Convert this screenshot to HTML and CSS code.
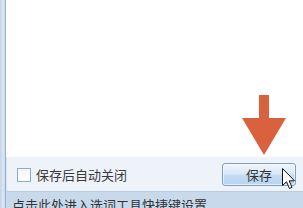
FILE: index.html
```html
<!DOCTYPE html>
<html>
<head>
<meta charset="utf-8">
<link rel="stylesheet" href="styles.css">
</head>
<body>
<div class="frame">
  <div class="side"></div>
  <div class="main">
    <div class="content"></div>
    <div class="panel">
      <label class="check"><span class="box"></span><span class="label">保存后自动关闭</span></label>
      <div class="btn">保存</div>
    </div>
    <div class="status">点击此处进入选词工具快捷键设置</div>
  </div>
</div>
<svg class="arrow" width="46" height="62" viewBox="0 0 46 62">
  <polygon points="17,0 27,0 27,23 44,23 22,60 0,23 17,23" fill="#d9613e"/>
</svg>
<svg class="cursor" width="16" height="24" viewBox="0 0 16 24">
  <path d="M1.5 1.5 L1.5 18.5 L5.5 14.8 L8.5 21.5 L11 20.4 L8.2 13.8 L13.5 13.8 Z" fill="#fff" stroke="#111" stroke-width="1" stroke-linejoin="miter"/>
</svg>
</body>
</html>
```
FILE: styles.css
```css
html, body {
  margin: 0;
  padding: 0;
}
body {
  width: 303px;
  height: 208px;
  overflow: hidden;
  position: relative;
  background: #c9d9ec;
  font-family: "Noto Sans CJK SC", "Noto Sans", sans-serif;
}
.frame {
  display: flex;
  height: 208px;
}
.side {
  width: 5px;
  flex: none;
  background: linear-gradient(to right, #c4d3e5, #dde6f1 60%, #d0dcea);
  border-right: 1px solid #8fb2dc;
}
.main {
  flex: 1;
  display: flex;
  flex-direction: column;
  min-width: 0;
}
.content {
  height: 157px;
  background: #fff;
  flex: none;
}
.panel {
  height: 35px;
  flex: none;
  box-sizing: border-box;
  background: #eef2f9;
  border-left: 1px solid #dbe4ef;
  border-bottom: 1px solid #b9cbe1;
  border-bottom-left-radius: 3px;
  display: flex;
  align-items: center;
  justify-content: space-between;
  padding: 0 7px 0 10px;
}
.check {
  display: flex;
  align-items: center;
  gap: 5px;
  margin-top: 1px;
}
.box {
  width: 12px;
  height: 12px;
  border: 1px solid #8eaad0;
  background: linear-gradient(#f3f6fa, #ffffff);
}
.label {
  font-size: 13px;
  color: #3a3a3a;
  line-height: 16px;
}
.btn {
  width: 72px;
  height: 21px;
  border: 1px solid #7f9fc9;
  border-radius: 3px;
  background: linear-gradient(#eef5fd, #dbe9f8 45%, #c3dbf3 55%, #bad5f1);
  box-shadow: inset 0 0 0 1px rgba(255,255,255,0.6);
  font-size: 13px;
  color: #333;
  display: flex;
  align-items: center;
  justify-content: center;
}
.status {
  font-size: 13px;
  color: #333;
  padding: 4px 0 0 6px;
  line-height: 18px;
  white-space: nowrap;
}
.arrow {
  position: absolute;
  left: 242px;
  top: 95px;
}
.cursor {
  position: absolute;
  left: 281px;
  top: 167px;
}
```
